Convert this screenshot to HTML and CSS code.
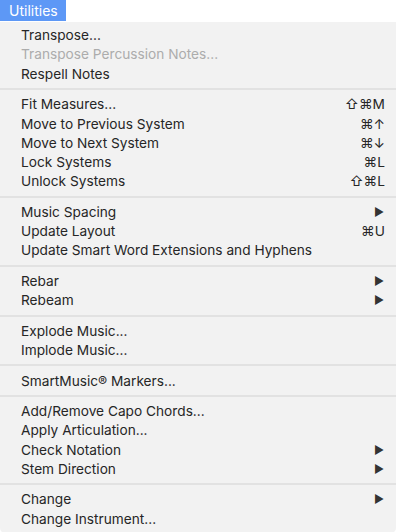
FILE: index.html
```html
<!DOCTYPE html>
<html lang="en">
<head>
    <meta charset="UTF-8">
    <title>Utilities menu</title>
    <link rel="stylesheet" href="styles.css">
</head>
<body>
    <div class="menubar">
        <span class="menu-title">Utilities</span>
    </div>

    <div class="menu">
        <div class="item">Transpose...</div>
        <div class="item disabled">Transpose Percussion Notes...</div>
        <div class="item">Respell Notes</div>
        <div class="sep"></div>

        <div class="item">Fit Measures... <span class="key">⇧⌘M</span></div>
        <div class="item">Move to Previous System <span class="key">⌘↑</span></div>
        <div class="item">Move to Next System <span class="key">⌘↓</span></div>
        <div class="item">Lock Systems <span class="key">⌘L</span></div>
        <div class="item">Unlock Systems <span class="key">⇧⌘L</span></div>
        <div class="sep"></div>

        <div class="item">Music Spacing <span class="arrow">▶</span></div>
        <div class="item">Update Layout <span class="key">⌘U</span></div>
        <div class="item">Update Smart Word Extensions and Hyphens</div>
        <div class="sep"></div>

        <div class="item">Rebar <span class="arrow">▶</span></div>
        <div class="item">Rebeam <span class="arrow">▶</span></div>
        <div class="sep"></div>

        <div class="item">Explode Music...</div>
        <div class="item">Implode Music...</div>
        <div class="sep"></div>

        <div class="item">SmartMusic® Markers...</div>
        <div class="sep"></div>

        <div class="item">Add/Remove Capo Chords...</div>
        <div class="item">Apply Articulation...</div>
        <div class="item">Check Notation <span class="arrow">▶</span></div>
        <div class="item">Stem Direction <span class="arrow">▶</span></div>
        <div class="sep"></div>

        <div class="item">Change <span class="arrow">▶</span></div>
        <div class="item">Change Instrument...</div>
    </div>
</body>
</html>
```

FILE: styles.css
```css
body {
    margin: 0;
    background-color: #ffffff;
    font-family: Inter, "Noto Sans", sans-serif;
    color: #262626;
    width: 398px;
    height: 532px;
    overflow: hidden;
}
.menubar {
    height: 22px;
    display: flex;
}
.menu-title {
    background-color: #5d98f6;
    color: #ffffff;
    font-size: 14px;
    line-height: 21px;
    height: 21px;
    padding: 0 8px 0 9px;
}
.menu {
    background-color: #f2f2f2;
    width: 396px;
    padding: 3.5px 0 5px 0;
    border-radius: 0 0 5px 5px;
}
.item {
    display: flex;
    justify-content: space-between;
    align-items: center;
    height: 19.3px;
    padding: 0 11px 0 21px;
    font-size: 13.7px;
}
.item.disabled {
    color: #acacac;
}
.key {
    font-size: 13.7px;
}
.arrow {
    font-size: 11px;
    color: #333333;
    padding-right: 1px;
}
.sep {
    height: 2px;
    background-color: #e2e2e2;
    margin: 4.6px 0;
}
```
